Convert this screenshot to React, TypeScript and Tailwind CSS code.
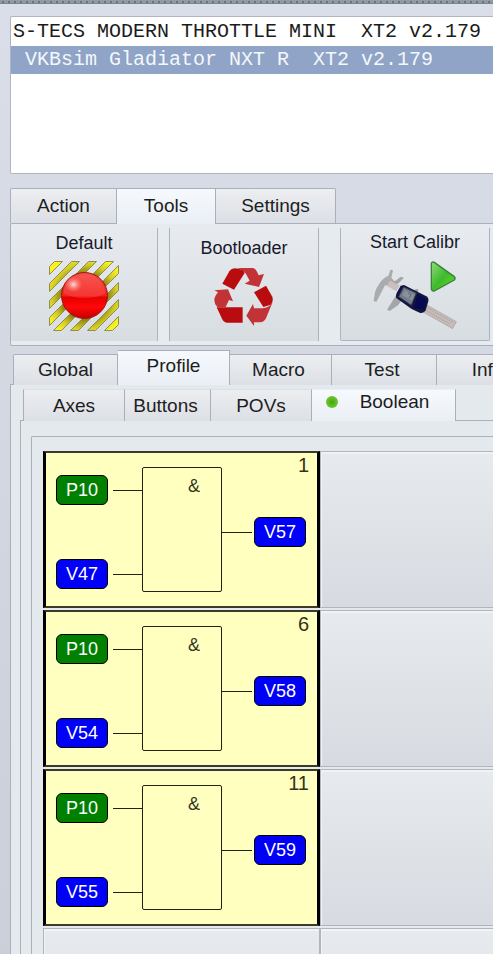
import React, { useState } from 'react';

interface TabProps {
  label: string;
  active: boolean;
  onClick: () => void;
  className: string;
  children?: React.ReactNode;
}

const Tab: React.FC<TabProps> = ({ label, active, onClick, className, children }) => (
  <button
    type="button"
    role="tab"
    aria-selected={active}
    onClick={onClick}
    className={`relative shrink-0 flex items-center justify-center border-t border-r border-[#a9afbb] text-[19px] leading-6 text-[#1c1e22] ${
      active ? 'bg-linear-to-b from-[#f6f9fd] to-[#eaeff5]' : 'bg-linear-to-b from-[#eceef1] to-[#dcdfe5]'
    } ${className}`}
  >
    {children}
    {label}
  </button>
);

// Hazard stripes, given as x + y ranges inside a 69px square
const STRIPES = [[5, 13], [22, 30], [39, 47], [56, 64], [73, 81], [90, 98], [107, 115], [124, 132]];

const stripePoints = (a: number, b: number) =>
  b <= 69
    ? `0,${a} ${a},0 ${b},0 0,${b}`
    : `69,${a - 69} 69,${b - 69} ${b - 69},69 ${a - 69},69`;

const DefaultIcon = () => (
  <svg width="70" height="70" viewBox="-0.5 -0.5 70 70" aria-hidden="true">
    <defs>
      <radialGradient id="stripe" cx="35" cy="35" r="46" gradientUnits="userSpaceOnUse">
        <stop offset="0.45" stopColor="#7c7208" />
        <stop offset="0.7" stopColor="#d2cc24" />
        <stop offset="0.9" stopColor="#f8f41c" />
      </radialGradient>
      <linearGradient id="ball" x1="0" y1="0" x2="0" y2="1">
        <stop offset="0" stopColor="#f4504a" />
        <stop offset="0.5" stopColor="#f0201c" />
        <stop offset="0.54" stopColor="#e60000" />
        <stop offset="0.75" stopColor="#ff0808" />
        <stop offset="1" stopColor="#c40000" />
      </linearGradient>
      <radialGradient id="shine">
        <stop offset="0" stopColor="#ffe4e0" stopOpacity="0.95" />
        <stop offset="1" stopColor="#ff8880" stopOpacity="0" />
      </radialGradient>
    </defs>
    {STRIPES.map(([a, b]) => (
      <polygon key={a} points={stripePoints(a, b)} fill="url(#stripe)" stroke="#8f8d55" strokeWidth="1" />
    ))}
    <circle cx="35" cy="34" r="23" fill="url(#ball)" stroke="#9c1512" strokeWidth="1" />
    <path d="M14 32C15 20 24 13 35 13s20 7 21 19c-12 6-30 6-42 0Z" fill="#ff6a62" opacity="0.3" />
    <ellipse cx="24" cy="23" rx="9" ry="8" fill="url(#shine)" />
  </svg>
);

const BootloaderIcon = () => (
  <svg width="60" height="60" viewBox="30 36 180 180" aria-hidden="true">
    <path d="M55 86 76 49Q82 40 92 40L118 44 122 54 90 104Z" fill="#b80c0e" />
    <path d="M92 39H145Q155 40 159 50L164 61 180 57 165 96 122 86 137 77 126 57Q117 41 92 39Z" fill="#c23337" />
    <path d="M150 112 186 92 205 125Q209 138 200 149L178 156Z" fill="#b80c0e" />
    <path d="M206 141 186 190Q180 202 168 202H150V213L127 182 147 147 150 160H176Q196 158 206 141Z" fill="#c23337" />
    <path d="M38 157H116V203H70Q59 202 54 191Z" fill="#b80c0e" />
    <path d="M31 106 72 103 87 139 75 135 65 156H40Q24 139 36 120L42 112Z" fill="#c23337" />
  </svg>
);

const CalibrIcon = () => (
  <svg width="100" height="80" viewBox="0 0 300 240" aria-hidden="true">
    <defs>
      <linearGradient id="play" x1="0" y1="0" x2="1" y2="1">
        <stop offset="0" stopColor="#8fdc7c" />
        <stop offset="0.5" stopColor="#3fb92c" />
        <stop offset="1" stopColor="#6ade2c" />
      </linearGradient>
    </defs>
    <path d="M76 44 84 46 79 69 92 81 78 94 60 91 34 141 26 138 30 112Q40 82 62 66L70 63Z" fill="#a9abad" />
    <path d="M107 65 117 68 104 82 91 92 84 83ZM96 116 114 130 100 150 74 168 66 164Z" fill="#a4a6a9" />
    <path d="M74 77 104 91 94 109 66 93Z" fill="#c9c0bd" />
    <path d="M187 151 274 200 263 221 176 172Z" fill="#c5bbb9" stroke="#a59f9f" strokeWidth="2" />
    <path d="M189 159 263 201M185 167 255 207" stroke="#91898b" strokeWidth="2" strokeDasharray="4 4" />
    <path d="M148 104 160 102 158 116 144 117Z" fill="#9b9ca2" />
    <path d="M117 90 184 124Q192 129 190 139L182 166Q176 176 164 173L140 162 94 129Q91 124 95 114L107 92Z" fill="#11143f" />
    <path d="M116 96 154 114 139 151 101 125Z" fill="#747b8b" stroke="#363b51" strokeWidth="3" />
    <path d="M119 106 149 120 141 137 112 121Z" fill="#8b919b" />
    <path d="M129 114 138 119 132 130" fill="none" stroke="#606777" strokeWidth="3" />
    <path d="M158 119 185 133 178 164 147 158Z" fill="#070950" />
    <path d="M199 25Q201 19 208 22L267 64Q273 70 268 75L207 108Q201 109 199 102Z" fill="url(#play)" stroke="#37843a" strokeWidth="4" />
  </svg>
);

const DEVICES = ['S-TECS MODERN THROTTLE MINI  XT2 v2.179', ' VKBsim Gladiator NXT R  XT2 v2.179'];

const GATES = [
  { id: 1, inputs: ['P10', 'V47'], output: 'V57' },
  { id: 6, inputs: ['P10', 'V54'], output: 'V58' },
  { id: 11, inputs: ['P10', 'V55'], output: 'V59' },
];

const Chip: React.FC<{ name: string }> = ({ name }) => (
  <span
    className={`flex h-[30px] w-[52px] items-center justify-center rounded-md border border-black text-lg leading-5 text-white ${
      name.startsWith('P') ? 'bg-[#008000]' : 'bg-[#0000f8]'
    }`}
  >
    {name}
  </span>
);

const Wire = () => <span className="h-px grow bg-[#22220f]" />;

interface GateProps {
  id: number;
  inputs: string[];
  output: string;
}

const GateCell: React.FC<GateProps> = ({ id, inputs, output }) => (
  <button
    type="button"
    aria-label={`Function ${id}`}
    className="flex h-[157px] w-[277px] shrink-0 items-start border-x-3 border-y-2 border-black border-y-[#3c3a2c] bg-[#ffffc0] pt-[14px] pl-[10px]"
  >
    <span className="mt-2 flex w-[86px] flex-col gap-[54px]">
      {inputs.map((name) => (
        <span key={name} className="flex items-center gap-[5px]">
          <Chip name={name} />
          <Wire />
        </span>
      ))}
    </span>
    <span className="flex h-[125px] w-20 justify-center rounded-xs border border-[#22220f] pt-2 pl-6 text-lg leading-5 text-[#33331c]">
      &amp;
    </span>
    <span className="-mt-[14px] flex grow flex-col gap-10">
      <span className="pr-2 text-right text-xl leading-6 text-[#33331c]">{id}</span>
      <span className="flex items-center gap-[2px] pr-[11px]">
        <Wire />
        <Chip name={output} />
      </span>
    </span>
  </button>
);

const emptyCell =
  'h-[157px] border border-[#b1b5c1] bg-linear-to-b from-[#e7eaee] to-[#d7dbe1] shadow-[inset_1px_2px_1px_#f1f3f6]';

export default function App() {
  const [device, setDevice] = useState(1);
  const [toolTab, setToolTab] = useState('Tools');
  const [mainTab, setMainTab] = useState('Profile');
  const [profileTab, setProfileTab] = useState('Boolean');

  const toolButton =
    'flex shrink-0 flex-col items-center border-[#adb2bf] bg-linear-to-b from-[#e7ebef] to-[#d8dde2] text-lg leading-5 text-[#171a2b]';

  return (
    <div className="flex h-screen flex-col overflow-hidden bg-linear-to-b from-[#dadee8] to-[#cbcfd8] font-['Liberation_Sans',Arial,sans-serif]">
      <div className="h-1 shrink-0 border-b border-[#7c858f] bg-[#929ba5] bg-[radial-gradient(circle,#68717c_1px,transparent_1px)] bg-size-[6px_4px]" />

      <main className="flex min-h-0 grow flex-col pt-3 pl-[10px]">
        <section
          aria-label="Devices"
          className="flex h-[158px] shrink-0 flex-col overflow-hidden rounded-l-xs border border-r-0 border-[#b0b5bf] bg-white pt-px font-['Liberation_Mono','Courier_New',monospace]"
        >
          {DEVICES.map((name, i) => (
            <button
              key={name}
              type="button"
              aria-pressed={device === i}
              onClick={() => setDevice(i)}
              className={`h-7 shrink-0 pl-[2px] text-left text-xl leading-7 whitespace-pre ${
                device === i ? 'bg-[#8fa4c6] text-[#f4f7fc]' : 'text-[#1b1b1b]'
              }`}
            >
              {name}
            </button>
          ))}
        </section>

        <div role="tablist" className="z-10 mt-[14px] -mb-px flex shrink-0 items-start">
          <Tab label="Action" active={toolTab === 'Action'} onClick={() => setToolTab('Action')} className="h-[35px] w-[107px] rounded-tl-xs border-l" />
          <Tab label="Tools" active={toolTab === 'Tools'} onClick={() => setToolTab('Tools')} className="h-9 w-[99px] pb-px" />
          <Tab label="Settings" active={toolTab === 'Settings'} onClick={() => setToolTab('Settings')} className="h-[35px] w-[120px] rounded-tr-xs" />
        </div>
        <section className="flex h-[123px] shrink-0 overflow-hidden rounded-l-xs border border-r-0 border-[#a9afbb] bg-[#e6ebf0] pt-1 pb-1">
          <button type="button" className={`${toolButton} w-[147px] gap-2 border-r pt-[5px]`}>
            Default
            <DefaultIcon />
          </button>
          <button type="button" className={`${toolButton} ml-[11px] w-[150px] gap-[9px] border-x pt-[10px]`}>
            Bootloader
            <BootloaderIcon />
          </button>
          <button type="button" className={`${toolButton} ml-[21px] w-[150px] gap-[3px] rounded-b-xs border-x border-b pt-1`}>
            Start Calibr
            <CalibrIcon />
          </button>
        </section>

        <div role="tablist" className="z-10 mt-[4px] -mb-px flex shrink-0 items-end overflow-hidden pl-[3px]">
          <Tab label="Global" active={mainTab === 'Global'} onClick={() => setMainTab('Global')} className="h-[31px] w-[105px] rounded-tl-xs border-l" />
          <Tab label="Profile" active={mainTab === 'Profile'} onClick={() => setMainTab('Profile')} className="h-[35px] w-[112px] pb-[5px]" />
          <Tab label="Macro" active={mainTab === 'Macro'} onClick={() => setMainTab('Macro')} className="h-[31px] w-[102px] pr-1" />
          <Tab label="Test" active={mainTab === 'Test'} onClick={() => setMainTab('Test')} className="h-[31px] w-[105px] pr-1" />
          <Tab label="Info" active={mainTab === 'Info'} onClick={() => setMainTab('Info')} className="h-[31px] w-[106px] pr-1" />
        </div>

        <section className="flex min-h-0 grow flex-col border-t border-l border-[#a9afbb] bg-[#e4e9ee] pt-1 pl-[9px]">
          <div role="tablist" className="z-10 -mb-px flex shrink-0 items-end overflow-hidden pl-[3px]">
            <Tab label="Axes" active={profileTab === 'Axes'} onClick={() => setProfileTab('Axes')} className="h-8 w-[102px] border-l border-t-transparent" />
            <Tab label="Buttons" active={profileTab === 'Buttons'} onClick={() => setProfileTab('Buttons')} className="h-8 w-[86px] border-t-transparent pr-1" />
            <Tab label="POVs" active={profileTab === 'POVs'} onClick={() => setProfileTab('POVs')} className="h-8 w-[101px] border-t-transparent" />
            <Tab label="Boolean" active={profileTab === 'Boolean'} onClick={() => setProfileTab('Boolean')} className="h-8 w-[144px] gap-[22px] border-t-transparent pr-3 pb-2">
              <span className="h-3 w-3 rounded-full bg-radial from-[#43a70e] to-[#7fd63a]" />
            </Tab>
          </div>

          <div className="flex min-h-0 grow flex-col border-t border-l border-[#a9afbb] pt-[15px] pl-[10px]">
            <div className="flex min-h-0 grow flex-col gap-[2px] overflow-hidden rounded-tl-xs border-t border-l border-[#a9afbb] pt-[14px] pl-[11px]">
              {GATES.map((gate) => (
                <div key={gate.id} className="flex shrink-0">
                  <GateCell {...gate} />
                  <div className={`${emptyCell} grow border-r-0`} />
                </div>
              ))}
              <div className="flex shrink-0">
                <div className={`${emptyCell} w-[277px]`} />
                <div className={`${emptyCell} grow border-r-0`} />
              </div>
            </div>
          </div>
        </section>
      </main>
    </div>
  );
}
